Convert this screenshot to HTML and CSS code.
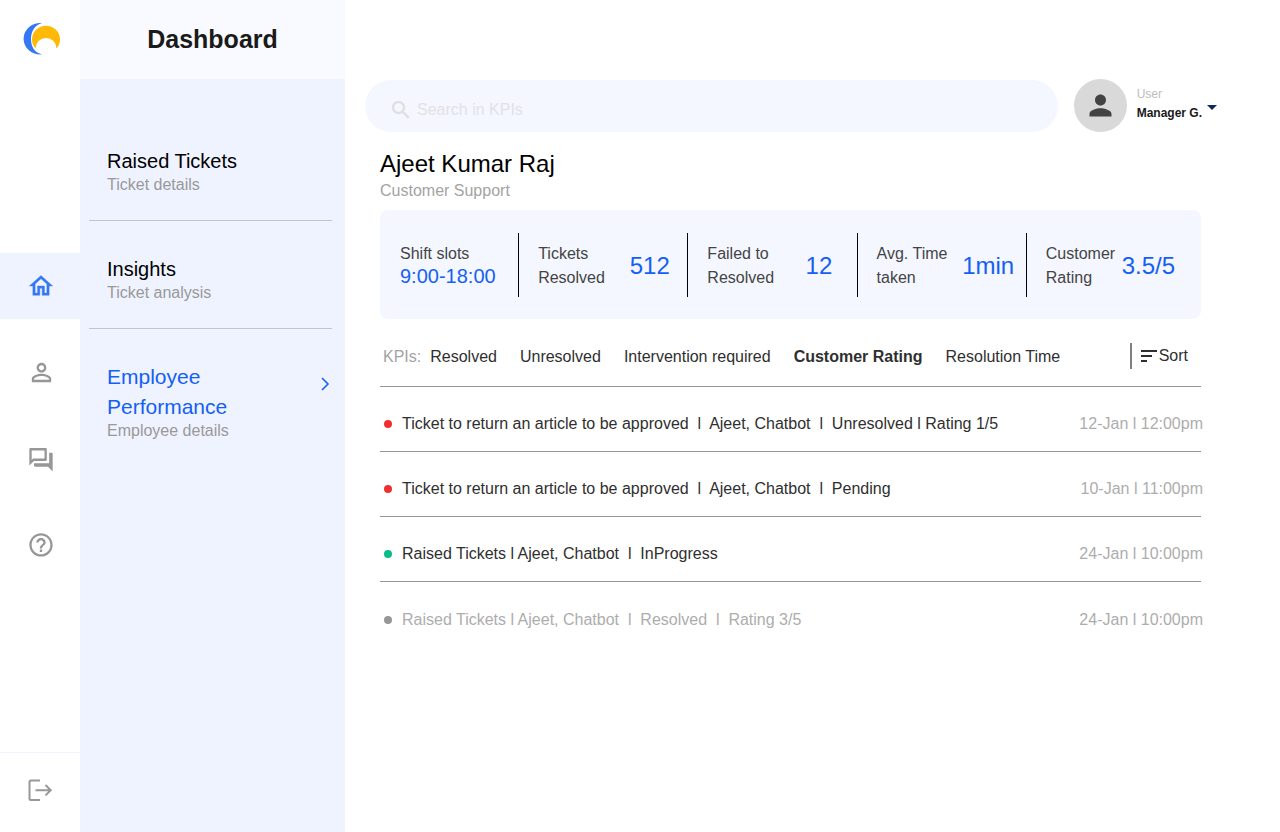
FILE: index.html
```html
<!DOCTYPE html>
<html lang="en">
<head>
<meta charset="utf-8">
<title>Dashboard</title>
<link rel="stylesheet" href="styles.css">
</head>
<body>
<div class="app">
  <nav class="rail" aria-label="Main">
    <a class="logo" href="#" aria-label="Home page">
      <svg width="38" height="34" viewBox="0 0 38 34">
        <path d="M19 1.200A16.200 15.700 0 1 0 19 32.300C12 31 8 25 8 17S12 2.800 19 1.200Z" fill="#3478f6"/>
        <path d="M12.500 26.500A14 13.700 0 1 1 33.500 26.500A10.400 10.400 0 1 0 12.500 26.500Z" fill="#ffb906"/>
      </svg>
    </a>
    <div class="rail-nav">
      <a class="rail-item rail-item-active" href="#" aria-label="Home">
        <svg width="28" height="28" viewBox="0 0 24 24" fill="currentColor" stroke="currentColor" stroke-width="0.300"><path d="M12 5.690l5 4.500V18h-2v-6H9v6H7v-7.810l5-4.500M12 3L2 12h3v8h6v-6h2v6h6v-8h3L12 3z"/></svg>
      </a>
      <a class="rail-item" href="#" aria-label="People">
        <svg width="29" height="29" viewBox="0 0 24 24" fill="currentColor"><path d="M12 5.900c1.160 0 2.100.940 2.100 2.100s-.940 2.100-2.100 2.100S9.900 9.160 9.900 8s.940-2.100 2.100-2.100m0 9c2.970 0 6.100 1.460 6.100 2.100v1.100H5.900V17c0-.640 3.130-2.100 6.100-2.100M12 4C9.790 4 8 5.790 8 8s1.790 4 4 4 4-1.790 4-4-1.790-4-4-4zm0 9c-2.670 0-8 1.340-8 4v3h16v-3c0-2.660-5.330-4-8-4z"/></svg>
      </a>
      <a class="rail-item" href="#" aria-label="Messages">
        <svg width="28" height="28" viewBox="0 -1.500 24 24" fill="currentColor"><path d="M15 4v7H5.170L4 12.170V4h11m1-2H3c-.550 0-1 .450-1 1v14l4-4h10c.550 0 1-.450 1-1V3c0-.550-.450-1-1-1zm5 4h-2v9H6v2c0 .550.450 1 1 1h11l4 4V7c0-.550-.450-1-1-1z"/></svg>
      </a>
      <a class="rail-item" href="#" aria-label="Help">
        <svg width="28" height="28" viewBox="0 -0.800 24 24" fill="currentColor"><path d="M11 18h2v-2h-2v2zm1-16C6.480 2 2 6.480 2 12s4.480 10 10 10 10-4.480 10-10S17.520 2 12 2zm0 18c-4.410 0-8-3.590-8-8s3.590-8 8-8 8 3.590 8 8-3.590 8-8 8zm0-14c-2.210 0-4 1.790-4 4h2c0-1.100.900-2 2-2s2 .900 2 2c0 2-3 1.750-3 5h2c0-2.250 3-2.500 3-5 0-2.210-1.790-4-4-4z"/></svg>
      </a>
    </div>
    <a class="rail-exit" href="#" aria-label="Log out">
      <svg width="26" height="24" viewBox="0 0 26 24" fill="none" stroke="currentColor" stroke-width="2"><path d="M13 2.500H4Q2.500 2.500 2.500 4V20.500Q2.500 22 4 22H13M8.500 12.200H24M18.500 7L23.700 12.200L18.500 17.400"/></svg>
    </a>
  </nav>

  <aside class="sidebar">
    <h1 class="sidebar-title">Dashboard</h1>
    <div class="menu">
      <a class="menu-item" href="#">
        <span class="menu-name">Raised Tickets</span>
        <span class="menu-note">Ticket details</span>
      </a>
      <a class="menu-item" href="#">
        <span class="menu-name">Insights</span>
        <span class="menu-note">Ticket analysis</span>
      </a>
      <a class="menu-item menu-item-active" href="#">
        <span class="menu-row">
          <span class="menu-name">Employee Performance</span>
          <svg class="chevron" width="10" height="14" viewBox="0 0 10 14" fill="none" stroke="currentColor" stroke-width="1.600"><path d="M2 1L8 7L2 13"/></svg>
        </span>
        <span class="menu-note">Employee details</span>
      </a>
    </div>
  </aside>

  <main class="main">
    <header class="topbar">
      <label class="search">
        <svg width="24" height="24" viewBox="0 0 24 24" fill="currentColor" stroke="currentColor" stroke-width="0.300"><path d="M15.500 14h-.790l-.280-.270C15.410 12.590 16 11.110 16 9.500 16 5.910 13.090 3 9.500 3S3 5.910 3 9.500 5.910 16 9.500 16c1.610 0 3.090-.590 4.230-1.570l.270.280v.790l5 4.990L20.490 19l-4.990-5zm-6 0C7.010 14 5 11.990 5 9.500S7.010 5 9.500 5 14 7.010 14 9.500 11.990 14 9.500 14z"/></svg>
        <input class="search-input" type="search" placeholder="Search in KPIs" aria-label="Search in KPIs">
      </label>
      <button class="user" type="button">
        <span class="avatar">
          <svg width="33" height="33" viewBox="0 0 24 24" fill="currentColor"><path d="M12 12c2.210 0 4-1.790 4-4s-1.790-4-4-4-4 1.790-4 4 1.790 4 4 4zm0 2c-2.670 0-8 1.340-8 4v2h16v-2c0-2.660-5.330-4-8-4z"/></svg>
        </span>
        <span class="user-text">
          <span class="user-role">User</span>
          <span class="user-name">Manager G.</span>
        </span>
        <svg class="caret" width="10" height="5" viewBox="0 0 10 5"><path d="M0 0H10L5 5Z" fill="#14265c"/></svg>
      </button>
    </header>

    <section class="content">
      <h2 class="person">Ajeet Kumar Raj</h2>
      <p class="team">Customer Support</p>

      <div class="stats">
        <div class="stat stat-stacked">
          <span class="stat-label">Shift slots</span>
          <span class="stat-hours">9:00-18:00</span>
        </div>
        <div class="stat"><span class="stat-label">Tickets<br>Resolved</span><span class="stat-value">512</span></div>
        <div class="stat"><span class="stat-label">Failed to<br>Resolved</span><span class="stat-value">12</span></div>
        <div class="stat"><span class="stat-label">Avg. Time<br>taken</span><span class="stat-value">1min</span></div>
        <div class="stat stat-last"><span class="stat-label">Customer<br>Rating</span><span class="stat-value">3.5/5</span></div>
      </div>

      <div class="kpis">
        <span class="kpis-label">KPIs:</span>
        <div class="tabs">
          <button class="tab" type="button">Resolved</button>
          <button class="tab" type="button">Unresolved</button>
          <button class="tab" type="button">Intervention required</button>
          <button class="tab tab-active" type="button">Customer Rating</button>
          <button class="tab" type="button">Resolution Time</button>
        </div>
        <button class="sort" type="button">
          <svg width="16" height="12" viewBox="0 0 16 12" fill="none" stroke="currentColor" stroke-width="2"><path d="M0 1H16M0 6H11M0 11H6"/></svg>
          <span>Sort</span>
        </button>
      </div>

      <ul class="tickets">
        <li class="ticket"><span class="dot dot-red"></span><span class="ticket-text">Ticket to return an article to be approved  l  Ajeet, Chatbot  l  Unresolved l Rating 1/5</span><time class="ticket-time">12-Jan l 12:00pm</time></li>
        <li class="ticket"><span class="dot dot-red"></span><span class="ticket-text">Ticket to return an article to be approved  l  Ajeet, Chatbot  l  Pending</span><time class="ticket-time">10-Jan l 11:00pm</time></li>
        <li class="ticket"><span class="dot dot-green"></span><span class="ticket-text">Raised Tickets l Ajeet, Chatbot  l  InProgress</span><time class="ticket-time">24-Jan l 10:00pm</time></li>
        <li class="ticket ticket-closed"><span class="dot dot-grey"></span><span class="ticket-text">Raised Tickets l Ajeet, Chatbot  l  Resolved  l  Rating 3/5</span><time class="ticket-time">24-Jan l 10:00pm</time></li>
      </ul>
    </section>
  </main>
</div>
</body>
</html>
```
FILE: styles.css
```css
* { box-sizing: border-box; }

body {
  margin: 0;
  background: #fff;
  color: #2f2f2f;
  font-family: "Liberation Sans", Arial, sans-serif;
  font-size: 16px;
  line-height: 20px;
}

a { color: inherit; text-decoration: none; }

button {
  padding: 0;
  border: 0;
  background: none;
  color: inherit;
  font: inherit;
  cursor: pointer;
}

h1, h2, p, ul { margin: 0; padding: 0; }
svg { display: block; flex-shrink: 0; }

.app { display: flex; min-height: 100vh; }

/* Icon rail */
.rail {
  display: flex;
  flex-direction: column;
  flex: 0 0 80px;
  color: #979797;
}
.logo {
  display: flex;
  justify-content: center;
  padding: 22px 0 0 4px;
}
.rail-nav {
  display: flex;
  flex-direction: column;
  gap: 20px;
  padding-top: 197px;
}
.rail-item {
  display: flex;
  align-items: center;
  justify-content: center;
  height: 66px;
  padding-left: 2px;
}
.rail-item-active { background: #eff3ff; color: #3478f6; }
.rail-exit {
  display: flex;
  align-items: center;
  justify-content: center;
  height: 80px;
  margin-top: auto;
  border-top: 1px solid #eff3ff;
  padding-bottom: 6px;
}

/* Sidebar */
.sidebar { flex: 0 0 265px; background: #eff3ff; }
.sidebar-title {
  height: 79px;
  background: #f9faff;
  color: #1a1a1a;
  font-size: 25px;
  line-height: 79px;
  text-align: center;
}
.menu { padding: 34px 13px 0 9px; }
.menu-item {
  display: block;
  padding: 33px 0 27px 18px;
  border-bottom: 1px solid #c3c3cb;
}
.menu-item:last-child { border-bottom: 0; }
.menu-name {
  display: block;
  color: #000;
  font-size: 20px;
  line-height: 30px;
}
.menu-note { display: block; color: #999; line-height: 17px; }
.menu-row { display: flex; justify-content: space-between; gap: 40px; }
.menu-item-active .menu-name { color: #1460f5; font-size: 21px; }
.chevron { margin: 15px 2px 0 0; color: #1460f5; }

/* Main area */
.main { flex: 1; min-width: 0; padding-top: 79px; }
.topbar {
  display: flex;
  align-items: center;
  gap: 16px;
  padding: 0 63px 0 20px;
}
.search {
  display: flex;
  align-items: center;
  flex: 1;
  gap: 4px;
  height: 52px;
  padding: 8px 24px 0;
  border-radius: 26px;
  background: #f4f7ff;
  color: #dfdfdf;
}
.search-input {
  flex: 1;
  min-width: 0;
  padding: 0;
  border: 0;
  outline: 0;
  background: none;
  color: #2f2f2f;
  font: inherit;
}
.search-input::placeholder { color: #e2e2e4; opacity: 1; }
.user { display: flex; align-items: center; text-align: left; }
.avatar {
  display: flex;
  align-items: center;
  justify-content: center;
  width: 53px;
  height: 53px;
  margin-right: 10px;
  border-radius: 50%;
  background: #d9d9d9;
  color: #434343;
}
.user-text { display: flex; flex-direction: column; padding-bottom: 6px; }
.user-role { color: #bdbdbd; font-size: 12px; }
.user-name { color: #1a1a1a; font-size: 12px; font-weight: 700; line-height: 18px; }
.caret { margin: 4px 0 0 5px; }

.content { padding: 15px 79px 40px 35px; }
.person {
  color: #000;
  font-size: 24px;
  font-weight: 400;
  line-height: 34px;
}
.team { color: #a3a3a3; line-height: 20px; }

.stats {
  display: grid;
  grid-template-columns: 138fr 169fr 169fr 169fr 175fr;
  margin-top: 9px;
  padding: 23px 0 22px;
  border-radius: 8px;
  background: #f4f7ff;
}
.stat {
  display: flex;
  align-items: center;
  height: 64px;
  padding: 2px 0 0 19px;
  border-left: 1px solid #000;
}
.stat-stacked {
  flex-direction: column;
  align-items: flex-start;
  justify-content: center;
  padding: 0 0 2px 20px;
  border-left: 0;
}
.stat-last { padding-right: 24px; }
.stat-label { flex-shrink: 0; min-width: 74px; color: #444; line-height: 24px; }
.stat-hours { color: #1460f5; font-size: 20px; }
.stat-value { flex: 1; color: #1460f5; font-size: 24px; text-align: center; }

.kpis {
  display: flex;
  align-items: center;
  height: 68px;
  padding: 6px 13px 0 3px;
  border-bottom: 1px solid #979797;
}
.kpis-label { margin-right: 9px; padding-top: 2px; color: #a3a3a3; }
.tabs { display: flex; gap: 23px; padding-top: 2px; white-space: nowrap; }
.tab-active { font-weight: 700; }
.sort {
  display: flex;
  align-items: center;
  gap: 2px;
  height: 26px;
  margin-left: auto;
  padding-left: 9px;
  border-left: 2px solid #808080;
}

.tickets { list-style: none; }
.ticket {
  display: flex;
  align-items: center;
  height: 65px;
  padding: 10px 0 0 4px;
  border-bottom: 1px solid #979797;
}
.ticket:last-child { border-bottom: 0; }
.dot { flex-shrink: 0; width: 8px; height: 8px; margin-right: 10px; border-radius: 50%; }
.dot-red { background: #ee3030; }
.dot-green { background: #08bd89; }
.dot-grey { background: #979797; }
.ticket-text { white-space: pre; }
.ticket-time { margin: 0 -2px 0 auto; color: #adadad; white-space: nowrap; }
.ticket-closed { color: #adadad; }
```
